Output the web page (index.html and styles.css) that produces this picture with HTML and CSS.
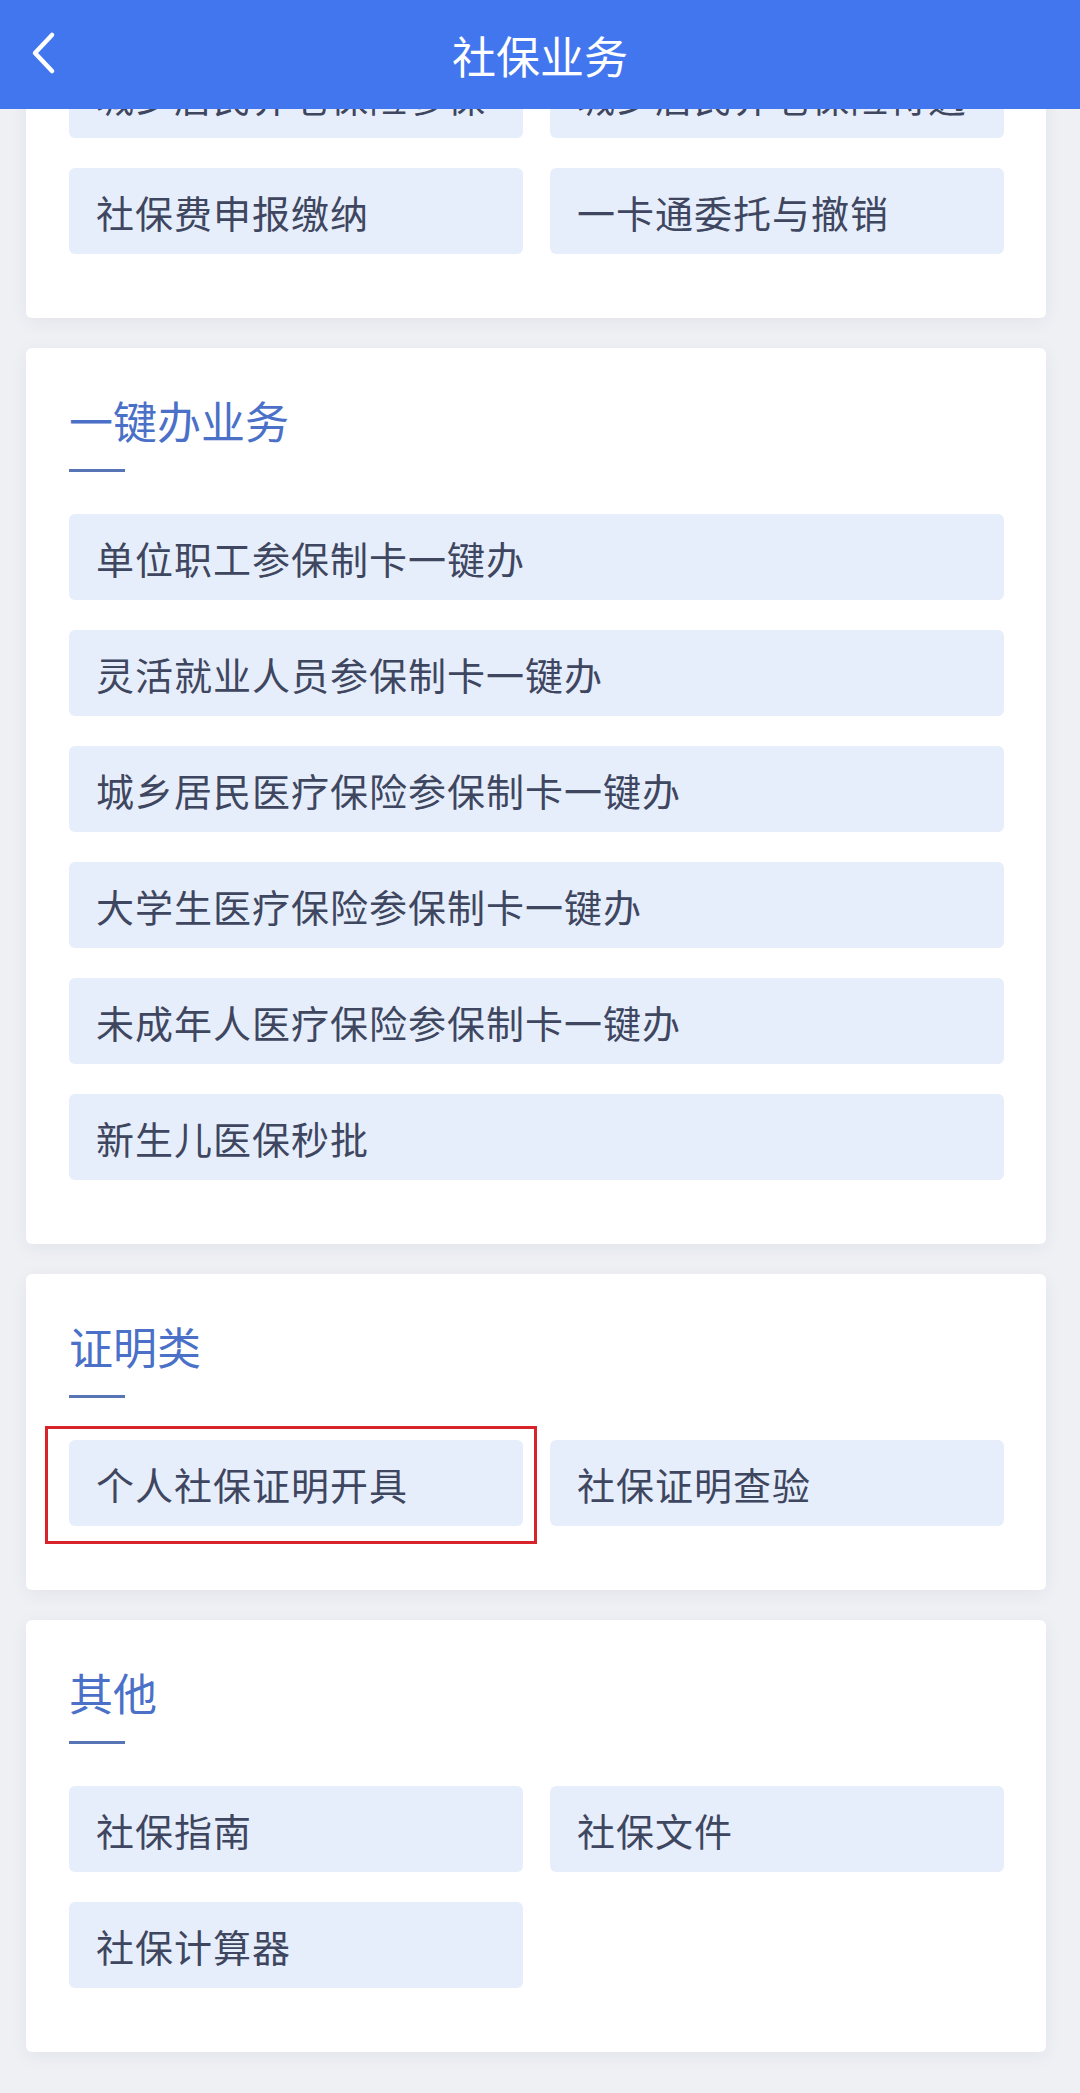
FILE: index.html
```html
<!DOCTYPE html>
<html lang="zh-CN">
<head>
    <meta charset="UTF-8">
    <title>社保业务</title>
    <link rel="stylesheet" href="styles.css">
</head>
<body>
    <div class="topbar">
        <a class="back" href="#">
            <svg width="26" height="44" viewBox="0 0 26 44"><path d="M22 4 L5 22 L22 40" fill="none" stroke="#fff" stroke-width="4.5" stroke-linecap="round" stroke-linejoin="round"/></svg>
        </a>
        <h1>社保业务</h1>
    </div>

    <div class="content">
        <!-- 参保登记 (scrolled under the bar) -->
        <div class="card">
            <h3>参保登记</h3>
            <div class="line"></div>
            <div class="grid">
                <div class="item">城乡居民养老保险参保</div>
                <div class="item">城乡居民养老保险待遇</div>
                <div class="item">社保费申报缴纳</div>
                <div class="item">一卡通委托与撤销</div>
            </div>
        </div>

        <div class="card">
            <h3>一键办业务</h3>
            <div class="line"></div>
            <div class="list">
                <div class="item">单位职工参保制卡一键办</div>
                <div class="item">灵活就业人员参保制卡一键办</div>
                <div class="item">城乡居民医疗保险参保制卡一键办</div>
                <div class="item">大学生医疗保险参保制卡一键办</div>
                <div class="item">未成年人医疗保险参保制卡一键办</div>
                <div class="item">新生儿医保秒批</div>
            </div>
        </div>

        <div class="card">
            <h3>证明类</h3>
            <div class="line"></div>
            <div class="grid">
                <div class="item marked">个人社保证明开具</div>
                <div class="item">社保证明查验</div>
            </div>
        </div>

        <div class="card">
            <h3>其他</h3>
            <div class="line"></div>
            <div class="grid">
                <div class="item">社保指南</div>
                <div class="item">社保文件</div>
                <div class="item">社保计算器</div>
            </div>
        </div>
    </div>
</body>
</html>
```

FILE: styles.css
```css
html, body { margin: 0; background: #eef0f4; }
body { font-family: "Noto Sans CJK SC", "Noto Sans", sans-serif; color: #3e4660; }

.topbar { position: fixed; top: 0; left: 0; right: 0; height: 109px; background: #4276ee; z-index: 10; display: flex; align-items: center; justify-content: center; }
.topbar h1 { margin: 0; font-size: 44px; font-weight: 400; color: #fff; line-height: 60px; }
.back { position: absolute; left: 30px; top: 31px; display: block; line-height: 0; }

/* page is scrolled a little: first card sits partly under the bar */
.content { margin-top: -114px; padding: 0 34px 38px 26px; }

.card { background: #fff; border-radius: 6px; padding: 42px 42px 64px 43px; margin-bottom: 30px; box-shadow: 0 4px 18px rgba(40, 50, 80, 0.06); }
.card:last-child { margin-bottom: 0; }
.card h3 { margin: 0; font-size: 44px; font-weight: 400; line-height: 60px; color: #4a70c8; }
.line { width: 56px; height: 3px; background: #5775b4; margin-top: 19px; margin-bottom: 42px; }

.grid { display: grid; grid-template-columns: 1fr 1fr; column-gap: 27px; row-gap: 30px; }
.list { display: flex; flex-direction: column; gap: 30px; }

.item { height: 86px; display: flex; align-items: center; padding-left: 27px; background: #e7eefb; border-radius: 6px; font-size: 38px; letter-spacing: 1px; color: #3e4660; }

.marked { position: relative; }
.marked::after { content: ""; position: absolute; top: -14px; left: -24px; right: -14px; bottom: -18px; border: 3px solid #d8232a; }
```
